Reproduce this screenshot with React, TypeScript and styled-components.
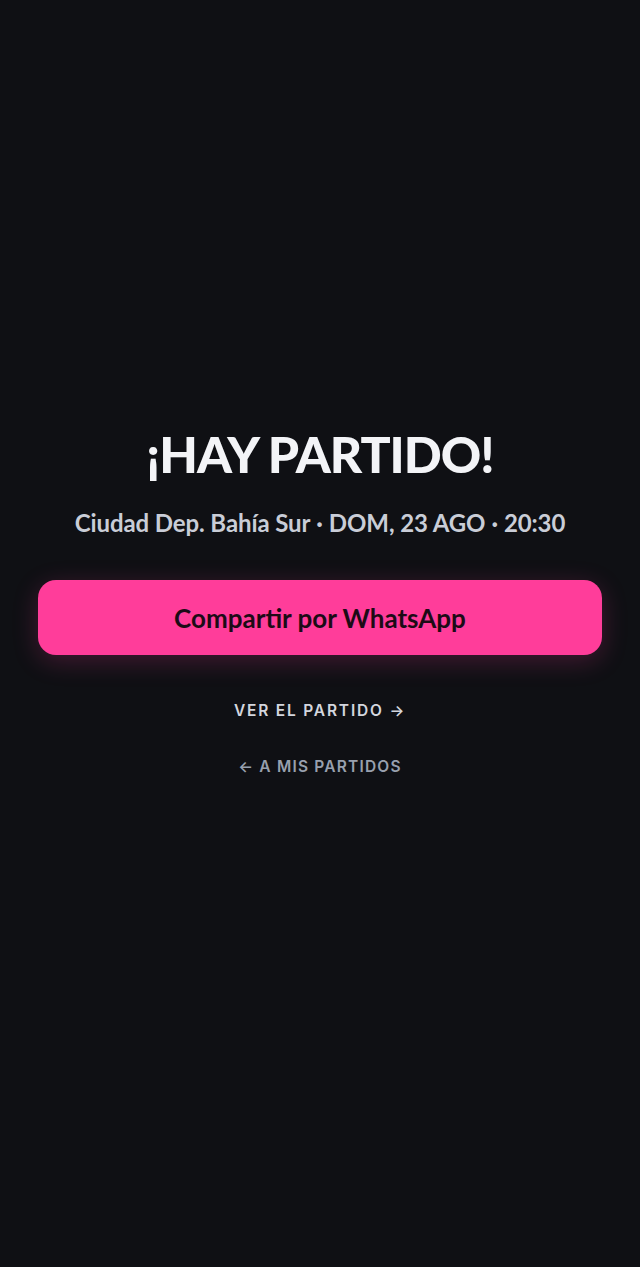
import styled, { createGlobalStyle } from 'styled-components';

const GlobalStyle = createGlobalStyle`
  html, body {
    margin: 0;
    padding: 0;
    background: #0f1014;
  }
  * {
    box-sizing: border-box;
  }
`;

const Page = styled.main`
  min-height: 1267px;
  padding: 424px 38px 0;
  display: flex;
  flex-direction: column;
  align-items: center;
  background: #0f1014;
`;

const Title = styled.h1`
  margin: 0;
  font-family: 'Lato', 'Inter', sans-serif;
  font-size: 50px;
  font-weight: 900;
  letter-spacing: -1px;
  line-height: 60px;
  color: #f3f4f7;
`;

const Details = styled.p`
  margin: 24px 0 0;
  font-family: 'Lato', 'Inter', sans-serif;
  font-size: 24px;
  font-weight: 700;
  letter-spacing: -0.1px;
  line-height: 30px;
  color: #c9cdd7;
`;

const Dot = styled.span`
  margin: 0 6px;
`;

const ShareButton = styled.button`
  margin-top: 42px;
  width: 100%;
  height: 75px;
  border: none;
  border-radius: 18px;
  background: #ff3d9a;
  box-shadow: 0 6px 26px rgba(255, 61, 154, 0.22);
  font-family: 'Lato', 'Inter', sans-serif;
  font-size: 26px;
  font-weight: 700;
  letter-spacing: 0;
  color: #1c0b16;
  cursor: pointer;
`;

const LinkText = styled.a<{ $muted?: boolean }>`
  display: block;
  margin-top: ${(p) => (p.$muted ? '36px' : '46px')};
  font-family: 'Inter', sans-serif;
  font-size: 15.5px;
  font-weight: 600;
  letter-spacing: ${(p) => (p.$muted ? '1.2px' : '1.8px')};
  line-height: 20px;
  color: ${(p) => (p.$muted ? '#98a0ae' : '#d3d6de')};
  text-decoration: none;
  cursor: pointer;
`;

export default function App() {
  return (
    <>
      <GlobalStyle />
      <Page>
        <Title>¡HAY PARTIDO!</Title>
        <Details>
          Ciudad Dep. Bahía Sur<Dot>·</Dot>DOM, 23 AGO<Dot>·</Dot>20:30
        </Details>
        <ShareButton>Compartir por WhatsApp</ShareButton>
        <LinkText>VER EL PARTIDO →</LinkText>
        <LinkText $muted>← A MIS PARTIDOS</LinkText>
      </Page>
    </>
  );
}
